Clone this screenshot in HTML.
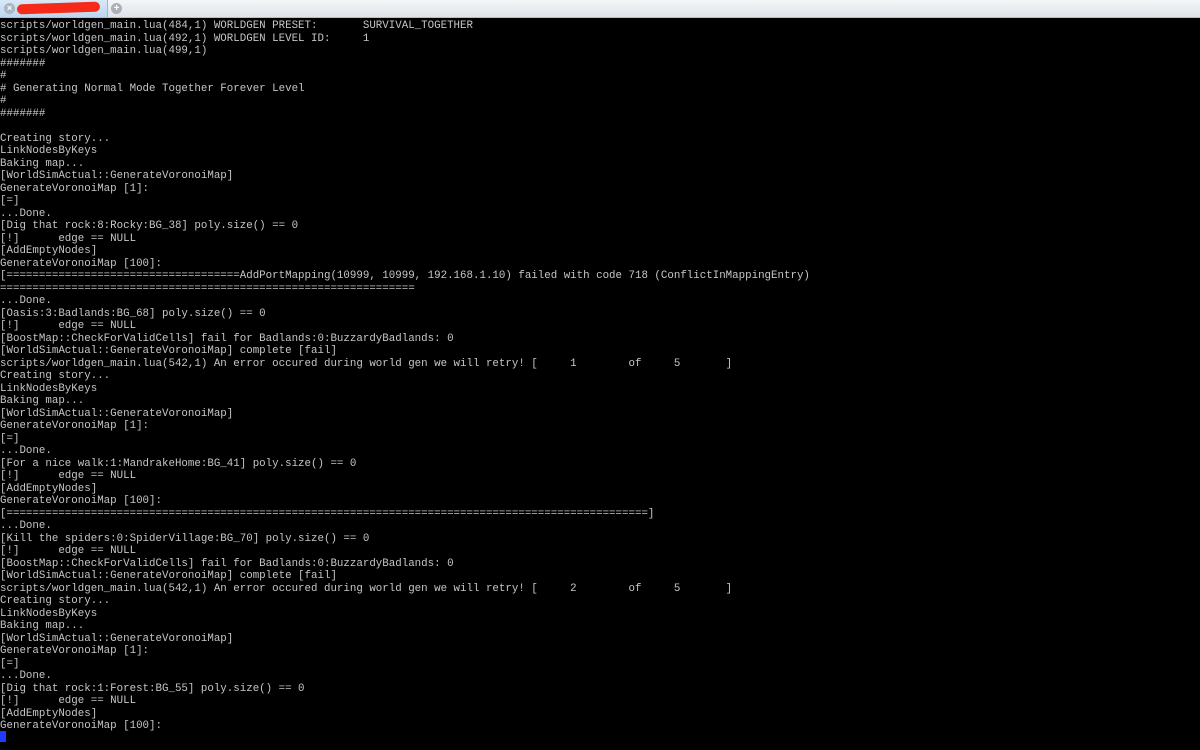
<!DOCTYPE html>
<html><head><meta charset="utf-8"><style>
html,body{margin:0;padding:0;width:1200px;height:750px;overflow:hidden;background:#000;}
.bar{position:absolute;left:0;top:0;width:1200px;height:17px;background:linear-gradient(#f4f6f8,#dfe3e8);border-bottom:1px solid #b8bec6;z-index:2;}
.tab{position:absolute;left:0;top:0;width:107px;height:17px;background:linear-gradient(#d9e9f8,#bcd6f0);border-right:1px solid #9fb4cc;}
.x{position:absolute;left:4px;top:3px;width:11px;height:11px;border-radius:50%;background:#a9b6c4;color:#fff;font:bold 9px/11px "Liberation Sans",sans-serif;text-align:center;}
.scrib{position:absolute;left:17px;top:3px;width:83px;height:10px;background:#f52a1a;border-radius:6px;transform:rotate(-2deg);}
.plus{position:absolute;left:111px;top:3px;width:11px;height:11px;border-radius:50%;background:#a9b0b8;color:#fff;font:bold 10px/11px "Liberation Sans",sans-serif;text-align:center;}
pre{position:absolute;left:0;top:20px;margin:0;color:#c6c6c6;font-family:"Liberation Mono",monospace;font-size:10.8px;line-height:12.5px;white-space:pre;}
.cur{position:absolute;left:0;top:731px;width:6px;height:11px;background:#1c3cff;}
</style></head><body>
<div class="bar"><div class="tab"><div class="x">×</div><div class="scrib"></div></div><div class="plus">+</div></div>
<pre>scripts/worldgen_main.lua(484,1) WORLDGEN PRESET:       SURVIVAL_TOGETHER
scripts/worldgen_main.lua(492,1) WORLDGEN LEVEL ID:     1
scripts/worldgen_main.lua(499,1)
#######
#
# Generating Normal Mode Together Forever Level
#
#######

Creating story...
LinkNodesByKeys
Baking map...
[WorldSimActual::GenerateVoronoiMap]
GenerateVoronoiMap [1]:
[=]
...Done.
[Dig that rock:8:Rocky:BG_38] poly.size() == 0
[!]      edge == NULL
[AddEmptyNodes]
GenerateVoronoiMap [100]:
[====================================AddPortMapping(10999, 10999, 192.168.1.10) failed with code 718 (ConflictInMappingEntry)
================================================================
...Done.
[Oasis:3:Badlands:BG_68] poly.size() == 0
[!]      edge == NULL
[BoostMap::CheckForValidCells] fail for Badlands:0:BuzzardyBadlands: 0
[WorldSimActual::GenerateVoronoiMap] complete [fail]
scripts/worldgen_main.lua(542,1) An error occured during world gen we will retry! [     1        of     5       ]
Creating story...
LinkNodesByKeys
Baking map...
[WorldSimActual::GenerateVoronoiMap]
GenerateVoronoiMap [1]:
[=]
...Done.
[For a nice walk:1:MandrakeHome:BG_41] poly.size() == 0
[!]      edge == NULL
[AddEmptyNodes]
GenerateVoronoiMap [100]:
[===================================================================================================]
...Done.
[Kill the spiders:0:SpiderVillage:BG_70] poly.size() == 0
[!]      edge == NULL
[BoostMap::CheckForValidCells] fail for Badlands:0:BuzzardyBadlands: 0
[WorldSimActual::GenerateVoronoiMap] complete [fail]
scripts/worldgen_main.lua(542,1) An error occured during world gen we will retry! [     2        of     5       ]
Creating story...
LinkNodesByKeys
Baking map...
[WorldSimActual::GenerateVoronoiMap]
GenerateVoronoiMap [1]:
[=]
...Done.
[Dig that rock:1:Forest:BG_55] poly.size() == 0
[!]      edge == NULL
[AddEmptyNodes]
GenerateVoronoiMap [100]:</pre>
<div class="cur"></div>
</body></html>
